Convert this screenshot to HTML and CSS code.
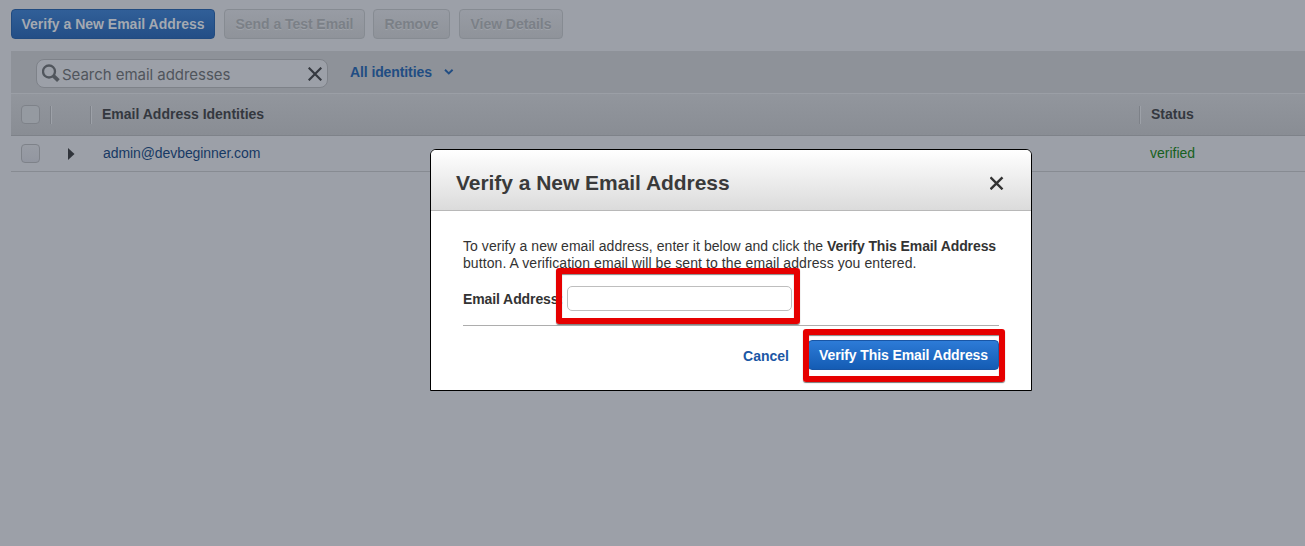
FILE: index.html
```html
<!DOCTYPE html>
<html lang="en">
<head>
<meta charset="utf-8">
<title>Email Addresses</title>
<link rel="stylesheet" href="styles.css">
</head>
<body>
<main class="page">
  <div class="actions">
    <button class="btn btn-primary b1"><span>Verify a New Email Address</span></button>
    <button class="btn b2"><span>Send a Test Email</span></button>
    <button class="btn b3"><span>Remove</span></button>
    <button class="btn b4"><span>View Details</span></button>
  </div>
  <section class="panel">
    <div class="filters">
      <div class="search">
        <svg class="lens" width="20" height="20" viewBox="0 0 20 20" fill="none" stroke="#51565d"><circle cx="7" cy="7.5" r="6" stroke-width="2.3"/><path d="M11.4 11.8 16.4 16.6" stroke-width="3.8"/></svg>
        <span class="placeholder">Search email addresses</span>
        <svg class="clear" width="14" height="14" viewBox="0 0 14 14" fill="none" stroke="#353940" stroke-width="2.2"><path d="M.7 .7 13.3 13.3M13.3 .7 .7 13.3"/></svg>
      </div>
      <div class="dropdown"><span class="drop-text">All identities</span>
        <svg width="10" height="6" viewBox="0 0 10 6" fill="none" stroke="#214d83" stroke-width="1.9"><path d="M1 .8 4.8 4.4 8.6 .8"/></svg>
      </div>
    </div>
    <div class="row head">
      <i class="check"></i><i class="sep s1"></i><i class="sep s2"></i>
      <span class="identity">Email Address Identities</span>
      <i class="sep s3"></i><span class="status">Status</span>
    </div>
    <div class="row item">
      <i class="check"></i>
      <svg class="expand" width="7" height="12" viewBox="0 0 7 12"><path d="M0 0 6.5 6 0 12Z" fill="#30343b"/></svg>
      <span class="identity">admin@devbeginner.com</span>
      <span class="status">verified</span>
    </div>
  </section>
</main>
<div class="dialog" role="dialog">
  <header class="dialog-head">
    <h1>Verify a New Email Address</h1>
    <svg width="14" height="14" viewBox="0 0 14 14" fill="none" stroke="#333" stroke-width="2.4"><path d="M.5 1.3 12.5 13.3M12.5 1.3 .5 13.3"/></svg>
  </header>
  <div class="dialog-body">
    <p><span class="line1">To verify a new email address, enter it below and click the <b>Verify This Email Address</b></span><br><span class="line2">button. A verification email will be sent to the email address you entered.</span></p>
    <div class="field"><label for="email">Email Address:</label><input id="email" type="text"></div>
    <div class="dialog-actions">
      <a class="cancel">Cancel</a>
      <button class="btn btn-submit"><span>Verify This Email Address</span></button>
    </div>
  </div>
  <div class="mark mark-field"></div>
  <div class="mark mark-submit"></div>
</div>
</body>
</html>
```
FILE: styles.css
```css
* { box-sizing: border-box; }
body {
  margin: 0;
  height: 546px;
  overflow: hidden;
  background: #9ca0a8;
  color: #333;
  font: 14px/17px "Liberation Sans", Arial, sans-serif;
  white-space: nowrap;
}
.page { padding: 9px 0 0 11px; }
.actions { display: flex; height: 30px; }
.btn {
  height: 30px;
  padding: 0;
  border: 1px solid #868b92;
  border-radius: 4px;
  background: linear-gradient(#989ca4, #8f939a);
  color: #7b8087;
  font: bold 14px/17px "Liberation Sans", Arial, sans-serif;
  text-shadow: 0 1px 0 #9fa3aa;
  letter-spacing: -.05px;
  white-space: nowrap;
}
.btn-primary {
  border-color: #214b80;
  background: linear-gradient(#315f98, #234e86);
  color: #a4a9b1;
  letter-spacing: 0;
  text-shadow: none;
}
.b1 { width: 204px; margin-right: 9px; }
.b2 { width: 141px; margin-right: 8px; }
.b3 { width: 77px; margin-right: 9px; }
.b4 { width: 104px; }
.panel { margin-top: 12px; }
.filters {
  display: flex;
  height: 42px;
  padding: 8px 0 0 25px;
  background: #8e9299;
}
.search {
  display: flex;
  align-items: center;
  width: 292px;
  height: 29px;
  padding: 0 5px 0 5px;
  border: 1px solid #7e8289;
  border-radius: 8px;
  background: #9ca0a8;
}
.lens { width: 20px; flex: none; }
.placeholder {
  flex: 1;
  padding-top: 3px;
  color: #50555c;
  font: 15px/18px Inter, "Liberation Sans", sans-serif;
  letter-spacing: -.04px;
}
.dropdown {
  display: flex;
  padding: 5px 0 0 22px;
  color: #214d83;
  font-weight: bold;
  letter-spacing: -.1px;
}
.dropdown svg { margin: 5px 0 0 12px; }
.row { display: flex; align-items: center; }
.head {
  height: 43px;
  border-top: 1px solid #9b9fa6;
  border-bottom: 1px solid #7e8289;
  background: linear-gradient(#92969d, #898d94);
  color: #34383f;
  font-weight: bold;
}
.item { height: 36px; border-bottom: 1px solid #878b92; color: #173964; }
.check {
  width: 19px;
  height: 19px;
  margin-left: 10px;
  border: 1px solid #7e8289;
  border-radius: 4px;
  background: linear-gradient(#999da5, #9296a0);
}
.head .check { background: #959aa1; }
.sep {
  width: 2px;
  height: 18px;
  border-left: 1px solid #7d8188;
  border-right: 1px solid #9da1a8;
}
.s1 { margin-left: 10px; }
.s2 { margin-left: 38px; }
.s3 { margin: 0 10px 0 0; }
.head .identity { width: 1037px; margin-left: 10px; }
.expand { margin-left: 28px; }
.item .identity { width: 1047px; margin-left: 28px; letter-spacing: -.08px; }
.item .status { color: #176021; }
.dialog {
  position: absolute;
  top: 149px;
  left: 430px;
  width: 602px;
  height: 242px;
  border: 1px solid #000;
  border-radius: 6px 6px 0 0;
  background: #fff;
}
.dialog-head {
  display: flex;
  align-items: center;
  justify-content: space-between;
  height: 61px;
  padding: 6px 27px 0 25px;
  border-bottom: 1px solid #b8b8b8;
  border-radius: 5px 5px 0 0;
  background: linear-gradient(#fff, #dbdbdb);
}
h1 {
  margin: 0;
  padding-bottom: 1px;
  color: #3a3a3a;
  font-size: 21px;
  line-height: 24px;
  letter-spacing: -.04px;
}
.dialog-body { padding: 27px 32px 0; }
p { margin: 0; }
.line1 { letter-spacing: .05px; }
.line1 b { letter-spacing: -.1px; }
.line2 { letter-spacing: .08px; }
.field {
  display: flex;
  align-items: center;
  height: 54px;
  border-bottom: 1px solid #adadad;
  font-weight: bold;
}
.field label { width: 104px; padding-top: 2px; letter-spacing: -.1px; }
.field input {
  width: 225px;
  height: 25px;
  border: 1px solid #bebebe;
  border-radius: 5px;
  background: #fff;
}
.dialog-actions {
  display: flex;
  align-items: center;
  justify-content: flex-end;
  padding-top: 14px;
}
.cancel { margin-right: 19px; padding-top: 2px; color: #1b57a5; font-weight: bold; }
.btn-submit {
  width: 191px;
  border-color: #1855a5;
  background: linear-gradient(#2d7bd7, #145cb4);
  color: #fff;
  letter-spacing: -.1px;
  text-shadow: none;
}
.mark {
  position: absolute;
  border: 6px solid #e60000;
  border-radius: 3px;
  box-shadow: 0 1px 1px #777, inset 0 1px 1px #888;
}
.mark-field { top: 118px; left: 125px; width: 244px; height: 56px; }
.mark-submit { top: 179px; left: 372px; width: 202px; height: 53px; }
```
